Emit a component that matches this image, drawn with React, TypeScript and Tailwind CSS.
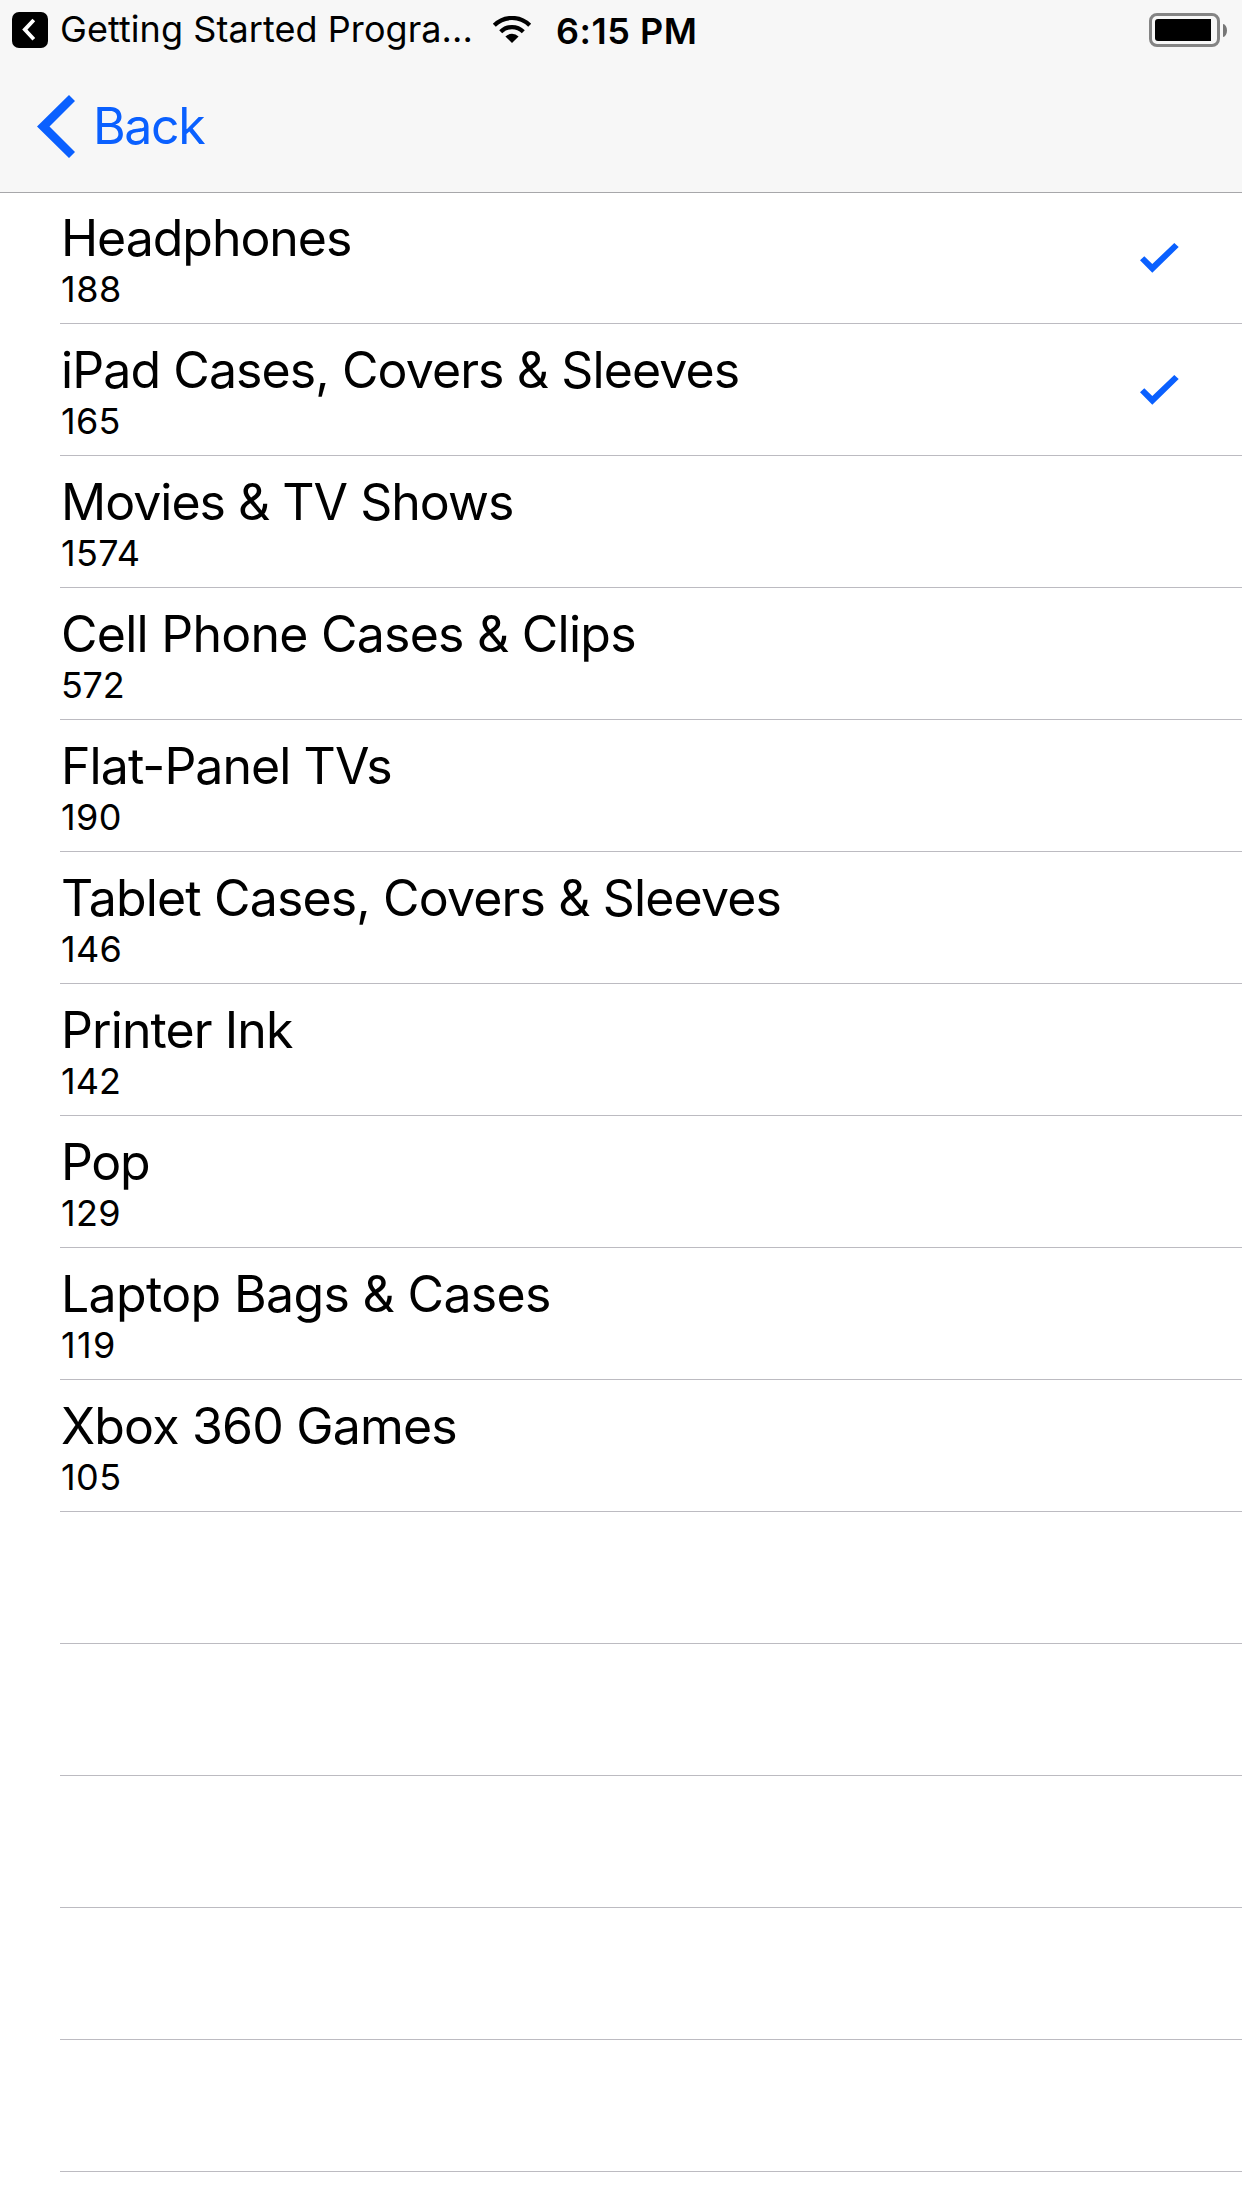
type Category = { name: string; count: string; tracking: string; countTracking: string; checked?: boolean };

const categories: Category[] = [
  { name: 'Headphones', count: '188', tracking: 'tracking-[-1.04px]', countTracking: 'tracking-[0.5px]', checked: true },
  { name: 'iPad Cases, Covers & Sleeves', count: '165', tracking: 'tracking-[-0.9px]', countTracking: 'tracking-[0.3px]', checked: true },
  { name: 'Movies & TV Shows', count: '1574', tracking: 'tracking-[-0.99px]', countTracking: 'tracking-[0.3px]' },
  { name: 'Cell Phone Cases & Clips', count: '572', tracking: 'tracking-[-0.75px]', countTracking: 'tracking-[-0.3px]' },
  { name: 'Flat-Panel TVs', count: '190', tracking: 'tracking-[-0.94px]', countTracking: 'tracking-[0.4px]' },
  { name: 'Tablet Cases, Covers & Sleeves', count: '146', tracking: 'tracking-[-0.85px]', countTracking: 'tracking-[0.3px]' },
  { name: 'Printer Ink', count: '142', tracking: 'tracking-[-0.91px]', countTracking: 'tracking-[0px]' },
  { name: 'Pop', count: '129', tracking: 'tracking-[-1.3px]', countTracking: 'tracking-[0.3px]' },
  { name: 'Laptop Bags & Cases', count: '119', tracking: 'tracking-[-0.65px]', countTracking: 'tracking-[1.4px]' },
  { name: 'Xbox 360 Games', count: '105', tracking: 'tracking-[-0.8px]', countTracking: 'tracking-[0.4px]' },
];

const emptyRows = [0, 1, 2, 3, 4];

function WifiIcon() {
  return (
    <svg className="ml-auto h-[28px] w-[40px]" viewBox="-20 -27 40 28" fill="none" stroke="black" strokeWidth="4.2">
      <path d="M-17.7 -17.7A25 25 0 0 1 17.7 -17.7" />
      <path d="M-11.3 -11.3A16 16 0 0 1 11.3 -11.3" />
      <path d="M0 0L-6.6 -6.6A9.4 9.4 0 0 1 6.6 -6.6Z" fill="black" stroke="none" />
    </svg>
  );
}

function StatusBar() {
  return (
    <div className="flex h-[60px] items-center pr-[15px] pl-3 text-[36px] leading-[44px] whitespace-nowrap">
      <div className="flex w-[520px] items-center">
        <svg className="h-9 w-9 rounded-[7px] bg-black" viewBox="0 0 36 36" fill="none" stroke="white" strokeWidth="3.8">
          <path d="M21.8 8L12.8 17.6L21.8 27.3" />
        </svg>
        <span className="-mt-0.5 ml-3 tracking-[0.07px]">Getting Started Progra...</span>
        <WifiIcon />
      </div>
      <span className="mt-0.5 ml-[24px] font-semibold tracking-[0.5px]">6:15 PM</span>
      <div className="ml-auto flex items-center gap-[3px]">
        <div className="h-[34px] w-[71px] rounded-[8px] border-[3px] border-[#848484] p-[3px]">
          <div className="h-full w-14 rounded-l-[3px] bg-black" />
        </div>
        <div className="h-[13px] w-1 bg-[#777777] [border-radius:0_100%_100%_0/0_50%_50%_0]" />
      </div>
    </div>
  );
}

function NavBar() {
  return (
    <button className="flex h-[132px] items-center pl-[37px] text-[50px] leading-[62px] tracking-[-1.4px] text-[#0a60ff]">
      <svg className="mr-[18px] h-[63px] w-[38px]" viewBox="0 0 38 63" fill="currentColor">
        <path d="M0 31.5L32 0L38 6L12.5 31.5L38 57L32 63Z" />
      </svg>
      Back
    </button>
  );
}

function Checkmark() {
  return (
    <svg className="mr-[63px] h-[30px] w-[39px]" viewBox="0 0 39 30" fill="#0a60ff">
      <path d="M0 17.3L4.3 13.3L12.3 21L34.3 0L38.7 4L12.3 29.7Z" />
    </svg>
  );
}

export default function App() {
  return (
    <div className="flex h-[2208px] w-[1242px] flex-col overflow-hidden bg-white font-['Inter',sans-serif] text-black">
      <header className="h-[193px] shrink-0 border-b border-[#a7a7aa] bg-[#f7f7f7]">
        <StatusBar />
        <NavBar />
      </header>
      <ul className="-mt-px pl-[60px]">
        {categories.map((c) => (
          <li key={c.name} className="flex h-[132px] items-center justify-between border-b border-[#bcbbc1]">
            <div className="h-full pt-[15px] pl-px">
              <div className={`text-[50px] leading-[62px] ${c.tracking}`}>{c.name}</div>
              <div className={`text-[36px] leading-[40px] ${c.countTracking}`}>{c.count}</div>
            </div>
            {c.checked && <Checkmark />}
          </li>
        ))}
        {emptyRows.map((n) => (
          <li key={n} className="h-[132px] border-b border-[#bcbbc1]" />
        ))}
      </ul>
    </div>
  );
}
